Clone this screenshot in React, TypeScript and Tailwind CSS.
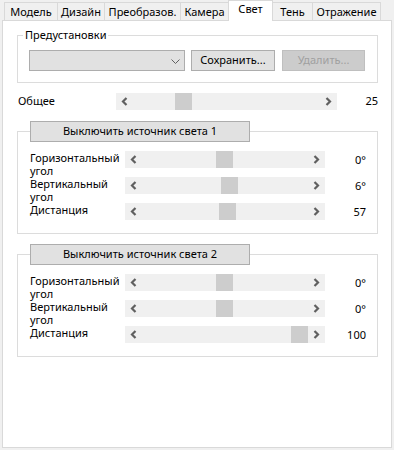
import React from "react";

const tabs = [
  { label: "Модель", w: "w-[54px]" },
  { label: "Дизайн", w: "w-[48px]" },
  { label: "Преобразов.", w: "w-[77px]" },
  { label: "Камера", w: "w-[49px]" },
  { label: "Свет", w: "w-[45px]", active: true },
  { label: "Тень", w: "w-[41px]" },
  { label: "Отражение", w: "w-[69px]" },
];

type Row = { label: string; value: number; min: number; max: number; unit?: string };

const light1: Row[] = [
  { label: "Горизонтальный угол", value: 0, min: -180, max: 180, unit: "°" },
  { label: "Вертикальный угол", value: 6, min: -90, max: 90, unit: "°" },
  { label: "Дистанция", value: 57, min: 10, max: 100 },
];

const light2: Row[] = [
  { label: "Горизонтальный угол", value: 0, min: -180, max: 180, unit: "°" },
  { label: "Вертикальный угол", value: 0, min: -90, max: 90, unit: "°" },
  { label: "Дистанция", value: 100, min: 10, max: 100 },
];

function Arrow({ dir }: { dir: "left" | "right" }) {
  return (
    <svg width="17" height="17" viewBox="0 0 17 17" className="shrink-0">
      <path
        d={dir === "left" ? "M10.5 5 L7 8.5 L10.5 12" : "M6.5 5 L10 8.5 L6.5 12"}
        fill="none"
        stroke="#606060"
        strokeWidth="2.2"
      />
    </svg>
  );
}

function ScrollBar({ width, value, min, max }: { width: number; value: number; min: number; max: number }) {
  const travel = width - 34 - 17;
  const offset = Math.floor(((value - min) / (max - min)) * travel);
  return (
    <div className="flex h-[17px] shrink-0 bg-[#f0f0f0]" style={{ width }}>
      <Arrow dir="left" />
      <div className="flex-1">
        <div className="h-[17px] w-[17px] bg-[#cdcdcd]" style={{ marginLeft: offset }} />
      </div>
      <Arrow dir="right" />
    </div>
  );
}

function LightGroup({ title, rows }: { title: string; rows: Row[] }) {
  return (
    <fieldset className="border border-[#dcdcdc] pl-[12px] pr-[11px] pt-[9px] pb-[13px]">
      <legend className="p-0">
        <div className="flex h-[21px] w-[220px] items-center justify-center border border-[#adadad] bg-[#e1e1e1]">
          {title}
        </div>
      </legend>
      <div className="flex flex-col">
        {rows.map((r) => (
          <div key={r.label} className={`flex items-start ${r.label.includes(" ") ? "h-[26px]" : "h-[17px]"}`}>
            <div className="w-[95px] shrink-0 pr-[6px] leading-[13px]">{r.label}</div>
            <ScrollBar width={200} value={r.value} min={r.min} max={r.max} />
            <div className="flex-1 text-right leading-[17px]">
              {r.value}
              {r.unit ?? ""}
            </div>
          </div>
        ))}
      </div>
    </fieldset>
  );
}

export default function App() {
  return (
    <div className="h-[450px] w-[394px] bg-[#f0f0f0] font-['Noto_Sans',sans-serif] text-[11px] text-black">
      <div className="relative z-10 flex h-[21px] items-start pl-[4px]">
        {tabs.map((t, i) =>
          t.active ? (
            <div
              key={t.label}
              className={`${t.w} -ml-px flex h-[21px] items-center justify-center border-x border-t border-[#d9d9d9] bg-white pb-[3px]`}
            >
              {t.label}
            </div>
          ) : (
            <div
              key={t.label}
              className={`${t.w} ${i === 0 ? "" : "-ml-px"} mt-[2px] flex h-[18px] items-center justify-center border-x border-t border-[#d9d9d9] bg-[#f0f0f0] pt-[1px]`}
            >
              {t.label}
            </div>
          )
        )}
      </div>

      <div className="mx-[2px] -mt-px h-[428px] w-[390px] border border-[#d9d9d9] bg-white pl-[14px] pr-[13px]">
        <fieldset className="mt-[6px] border border-[#dcdcdc] pl-[5px] pt-[7px] pb-[11px]">
          <legend className="px-[2px] leading-[16px]">Предустановки</legend>
          <div className="flex pl-[6px]">
            <div className="flex h-[21px] w-[156px] items-start justify-end border border-[#adadad] bg-[#e1e1e1] pr-[4px] pt-[8px]">
              <svg width="9" height="5" viewBox="0 0 9 5">
                <path d="M0.5 0.5 L4.5 4.5 L8.5 0.5" fill="none" stroke="#606060" strokeWidth="1" />
              </svg>
            </div>
            <button className="ml-[6px] flex h-[21px] w-[84px] items-center justify-center border border-[#adadad] bg-[#e1e1e1]">
              Сохранить...
            </button>
            <button
              disabled
              className="ml-[7px] flex h-[21px] w-[83px] items-center justify-center border border-[#bfbfbf] bg-[#cccccc] text-[#a0a0a0]"
            >
              Удалить...
            </button>
          </div>
        </fieldset>

        <div className="mt-[10px] flex h-[17px] items-center">
          <div className="w-[99px] shrink-0 pl-px">Общее</div>
          <ScrollBar width={221} value={25} min={0} max={100} />
          <div className="flex-1 text-right">25</div>
        </div>

        <div className="mt-[11px]">
          <LightGroup title="Выключить источник света 1" rows={light1} />
        </div>
        <div className="mt-[10px]">
          <LightGroup title="Выключить источник света 2" rows={light2} />
        </div>
      </div>
    </div>
  );
}
